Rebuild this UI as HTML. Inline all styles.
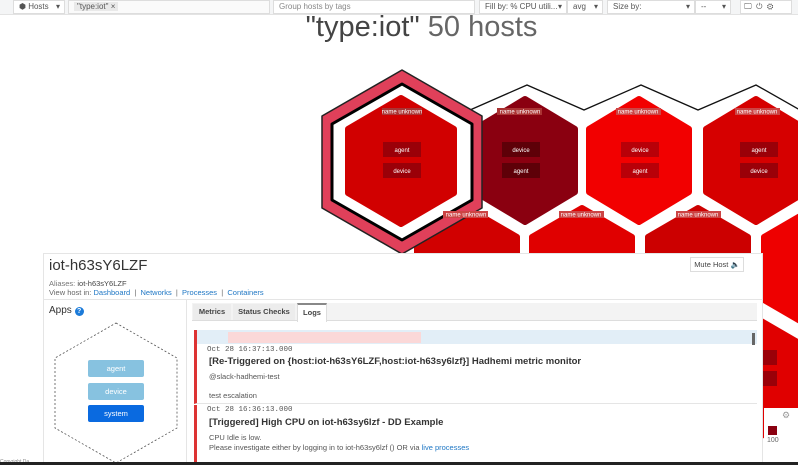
<!DOCTYPE html>
<html><head><meta charset="utf-8"><style>
*{margin:0;padding:0;box-sizing:border-box}
body{width:798px;height:465px;overflow:hidden;background:#fff;font-family:"Liberation Sans",sans-serif;position:relative;color:#333}
.abs{position:absolute}
.box{position:absolute;border:1px solid #ddd;background:#fff;font-size:8px;color:#555;height:14px;line-height:12px;padding-left:5px}
.lbl{fill:#fff;font-size:6px;font-family:"Liberation Sans",sans-serif}
a{color:#1f77c4;text-decoration:none}
</style></head><body>
<div class="abs" style="left:0;top:0;width:798px;height:15px;background:#f4f5f6;border-bottom:1px solid #e3e3e3"></div>
<div class="box" style="left:13px;top:0;width:52px">⬢ Hosts <span style="float:right;margin-right:4px">▾</span></div>
<div class="box" style="left:68px;top:0;width:202px;background:#fafafa"><span style="background:#e9e9e9;padding:0 3px">"type:iot" ×</span></div>
<div class="box" style="left:273px;top:0;width:202px;color:#888">Group hosts by tags</div>
<div class="box" style="left:479px;top:0;width:88px">Fill by: % CPU utili... <span style="float:right;margin-right:4px">▾</span></div>
<div class="box" style="left:567px;top:0;width:36px">avg <span style="float:right;margin-right:4px">▾</span></div>
<div class="box" style="left:607px;top:0;width:88px">Size by: <span style="float:right;margin-right:4px">▾</span></div>
<div class="box" style="left:695px;top:0;width:36px">-- <span style="float:right;margin-right:4px">▾</span></div>
<div class="box" style="left:740px;top:0;width:52px;font-size:8px;padding-left:3px">🖵 &nbsp;⏻ &nbsp;⚙</div>
<div class="abs" style="left:0;top:11px;width:798px;text-align:center;font-size:29px;color:#444;padding-left:45px">"type:iot" <span style="color:#666">50 hosts</span></div>

<svg class="abs" style="left:0;top:0" width="798" height="465">
<g stroke="#111" stroke-width="1.3" fill="none">
<polyline points="470,110 527,85 584,110 584,110 641,85 698,110 756,85 800,110"/>
</g>
<g stroke-linejoin="round" stroke-width="6">
<polygon points="467,208 517,237 517,300 467,329 417,300 417,237" fill="#d10000" stroke="#d10000"/>
<polygon points="582,208 632,237 632,300 582,329 532,300 532,237" fill="#e00000" stroke="#e00000"/>
<polygon points="698,208 748,237 748,300 698,329 648,300 648,237" fill="#cc0000" stroke="#cc0000"/>
<polygon points="814,208 864,237 864,300 814,329 764,300 764,237" fill="#ee0000" stroke="#ee0000"/>
<polygon points="756,318 806,347 806,410 756,439 706,410 706,347" fill="#e00000" stroke="#e00000"/>
<polygon points="525,99 575,129 575,192 525,222 475,192 475,129" fill="#8a0010" stroke="#8a0010"/>
<polygon points="639,99 689,129 689,192 639,222 589,192 589,129" fill="#f20000" stroke="#f20000"/>
<polygon points="756,99 806,129 806,192 756,222 706,192 706,129" fill="#d60000" stroke="#d60000"/>
</g>
<polygon points="402,70 482,116 482,208 402,254 322,208 322,116" fill="#e0405a" stroke="#222" stroke-width="1.5" stroke-linejoin="round"/>
<polygon points="402,84 472,124 472,200 402,240 332,200 332,124" fill="#fff" stroke="#000" stroke-width="3" stroke-linejoin="round"/>
<polygon points="401,98 454,129 454,193 401,224 348,193 348,129" fill="#d10000" stroke="#d10000" stroke-width="6" stroke-linejoin="round"/>
<g>
<rect x="382" y="108" width="40" height="7" fill="#a33"/><text x="402" y="113.5" text-anchor="middle" class="lbl">name unknown</text>
<rect x="497" y="108" width="45" height="7" fill="#a33"/><text x="520" y="113.5" text-anchor="middle" class="lbl">name unknown</text>
<rect x="616" y="108" width="45" height="7" fill="#c44"/><text x="638" y="113.5" text-anchor="middle" class="lbl">name unknown</text>
<rect x="735" y="108" width="45" height="7" fill="#c44"/><text x="757" y="113.5" text-anchor="middle" class="lbl">name unknown</text>
<rect x="443" y="211" width="45" height="7" fill="#c44"/><text x="466" y="216.5" text-anchor="middle" class="lbl">name unknown</text>
<rect x="559" y="211" width="45" height="7" fill="#c44"/><text x="581" y="216.5" text-anchor="middle" class="lbl">name unknown</text>
<rect x="676" y="211" width="45" height="7" fill="#c44"/><text x="698" y="216.5" text-anchor="middle" class="lbl">name unknown</text>
</g>
<g>
<rect x="383" y="142" width="38" height="15" fill="#9a0008"/><text x="402" y="152" text-anchor="middle" class="lbl">agent</text>
<rect x="383" y="163" width="38" height="15" fill="#9a0008"/><text x="402" y="173" text-anchor="middle" class="lbl">device</text>
<rect x="502" y="142" width="38" height="15" fill="#5e0008"/><text x="521" y="152" text-anchor="middle" class="lbl">device</text>
<rect x="502" y="163" width="38" height="15" fill="#5e0008"/><text x="521" y="173" text-anchor="middle" class="lbl">agent</text>
<rect x="621" y="142" width="38" height="15" fill="#b80008"/><text x="640" y="152" text-anchor="middle" class="lbl">device</text>
<rect x="621" y="163" width="38" height="15" fill="#b80008"/><text x="640" y="173" text-anchor="middle" class="lbl">agent</text>
<rect x="740" y="142" width="38" height="15" fill="#9a0008"/><text x="759" y="152" text-anchor="middle" class="lbl">agent</text>
<rect x="740" y="163" width="38" height="15" fill="#9a0008"/><text x="759" y="173" text-anchor="middle" class="lbl">device</text>
<rect x="757" y="350" width="20" height="15" fill="#9a0008"/><rect x="757" y="371" width="20" height="15" fill="#9a0008"/>
</g>
</svg>

<div class="abs" style="left:43px;top:253px;width:720px;height:212px;background:#fff;border:1px solid #e5e5e5"></div>
<div class="abs" style="left:49px;top:257px;font-size:15px;color:#333">iot-h63sY6LZF</div>
<div class="abs" style="left:49px;top:279px;font-size:7.5px;color:#777">Aliases: <span style="color:#444">iot-h63sY6LZF</span></div>
<div class="abs" style="left:49px;top:288px;font-size:7.5px;color:#666">View host in: <a>Dashboard</a> &nbsp;|&nbsp; <a>Networks</a> &nbsp;|&nbsp; <a>Processes</a> &nbsp;|&nbsp; <a>Containers</a></div>
<div class="abs" style="left:690px;top:257px;width:54px;height:15px;border:1px solid #ddd;font-size:7.5px;line-height:13px;text-align:center;color:#444">Mute Host 🔈</div>
<div class="abs" style="left:43px;top:299px;width:720px;border-top:1px solid #e5e5e5"></div>
<div class="abs" style="left:186px;top:299px;height:166px;border-left:1px solid #e5e5e5"></div>
<div class="abs" style="left:49px;top:305px;font-size:10px;color:#333">Apps <span style="display:inline-block;width:9px;height:9px;border-radius:50%;background:#1c7bd9;color:#fff;font-size:7px;text-align:center;line-height:9px;font-weight:bold">?</span></div>
<svg class="abs" style="left:50px;top:320px" width="130" height="145"><polygon points="66,3 127,38 127,108 66,143 5,108 5,38" fill="none" stroke="#555" stroke-dasharray="2,2" stroke-width="0.8"/></svg>
<div class="abs" style="left:88px;top:360px;width:56px;height:17px;background:#87c2e0;color:#fff;font-size:7.5px;text-align:center;line-height:17px;border-radius:2px">agent</div>
<div class="abs" style="left:88px;top:383px;width:56px;height:17px;background:#87c2e0;color:#fff;font-size:7.5px;text-align:center;line-height:17px;border-radius:2px">device</div>
<div class="abs" style="left:88px;top:405px;width:56px;height:17px;background:#0a6ae0;color:#fff;font-size:7.5px;text-align:center;line-height:17px;border-radius:2px">system</div>
<div class="abs" style="left:192px;top:303px;width:565px;height:18px;background:#f3f3f3;border-bottom:1px solid #ddd"></div>
<div class="abs" style="left:193px;top:304px;width:38px;height:16px;background:#ececec;font-size:7.5px;font-weight:bold;text-align:center;line-height:16px;color:#444">Metrics</div>
<div class="abs" style="left:233px;top:304px;width:62px;height:16px;background:#ececec;font-size:7.5px;font-weight:bold;text-align:center;line-height:16px;color:#444">Status Checks</div>
<div class="abs" style="left:297px;top:303px;width:30px;height:19px;background:#fff;border:1px solid #ddd;border-top:2px solid #888;border-bottom:none;font-size:7.5px;font-weight:bold;text-align:center;line-height:16px;color:#444">Logs</div>
<div class="abs" style="left:194px;top:330px;width:563px;height:14px;background:#e2eef7;border-left:3px solid #d33"></div>
<div class="abs" style="left:228px;top:332px;width:193px;height:11px;background:#fbd8d8"></div>
<div class="abs" style="left:752px;top:333px;width:3px;height:12px;background:#666"></div>
<div class="abs" style="left:194px;top:344px;width:563px;height:60px;border-left:3px solid #d33;border-bottom:1px solid #e5e5e5"></div>
<div class="abs" style="left:207px;top:346px;font-family:'Liberation Mono',monospace;font-size:7.5px;color:#555">Oct 28 16:37:13.000</div>
<div class="abs" style="left:209px;top:356px;font-size:9.5px;font-weight:bold;color:#333">[Re-Triggered on {host:iot-h63sY6LZF,host:iot-h63sy6lzf}] Hadhemi metric monitor</div>
<div class="abs" style="left:209px;top:372px;font-size:7.5px;color:#555">@slack-hadhemi-test</div>
<div class="abs" style="left:209px;top:391px;font-size:7.5px;color:#555">test escalation</div>
<div class="abs" style="left:194px;top:405px;width:563px;height:60px;border-left:3px solid #d33"></div>
<div class="abs" style="left:207px;top:406px;font-family:'Liberation Mono',monospace;font-size:7.5px;color:#555">Oct 28 16:36:13.000</div>
<div class="abs" style="left:209px;top:417px;font-size:9.5px;font-weight:bold;color:#333">[Triggered] High CPU on iot-h63sy6lzf - DD Example</div>
<div class="abs" style="left:209px;top:433px;font-size:7.5px;color:#555">CPU Idle is low.</div>
<div class="abs" style="left:209px;top:443px;font-size:7.5px;color:#555">Please investigate either by logging in to iot-h63sy6lzf () OR via <a>live processes</a></div>
<div class="abs" style="left:764px;top:408px;width:34px;height:47px;background:#fff"></div>
<div class="abs" style="left:782px;top:410px;font-size:9px;color:#999">⚙</div>
<div class="abs" style="left:768px;top:426px;width:9px;height:9px;background:#8a0010"></div>
<div class="abs" style="left:767px;top:437px;font-size:7px;color:#666">100</div>
<div class="abs" style="left:0;top:459px;font-size:5px;color:#888">Copyright Da</div>
<div class="abs" style="left:0;top:462px;width:798px;height:3px;background:#222"></div>
</body></html>
